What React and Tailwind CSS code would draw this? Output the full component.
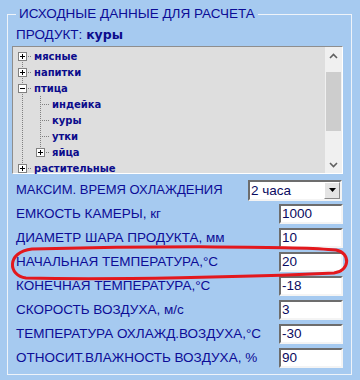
const treeItems = [
  { label: "мясные", cells: ["first"], box: "plus" },
  { label: "напитки", cells: ["tee"], box: "plus" },
  { label: "птица", cells: ["tee"], box: "minus" },
  { label: "индейка", cells: ["pipe", "tee"] },
  { label: "куры", cells: ["pipe", "tee"] },
  { label: "утки", cells: ["pipe", "tee"] },
  { label: "яйца", cells: ["pipe", "end"], box: "plus" },
  { label: "растительные", cells: ["end"], box: "plus" },
];

const fields = [
  { label: "ЕМКОСТЬ КАМЕРЫ, кг", value: "1000" },
  { label: "ДИАМЕТР ШАРА ПРОДУКТА, мм", value: "10" },
  { label: "НАЧАЛЬНАЯ ТЕМПЕРАТУРА,°С", value: "20" },
  { label: "КОНЕЧНАЯ ТЕМПЕРАТУРА,°С", value: "-18" },
  { label: "СКОРОСТЬ ВОЗДУХА, м/с", value: "3" },
  { label: "ТЕМПЕРАТУРА ОХЛАЖД.ВОЗДУХА,°С", value: "-30" },
  { label: "ОТНОСИТ.ВЛАЖНОСТЬ ВОЗДУХА, %", value: "90" },
];

// one 18x16 gutter cell of the tree lines
const TreeCell = ({ kind, box, last }) => {
  const dot = { stroke: "#808080", strokeWidth: 1, strokeDasharray: "1 1" };
  return (
    <svg width="18" height="16" className="shrink-0">
      {(kind === "pipe" || kind === "tee") && <line x1="9.5" y1="0" x2="9.5" y2="16" {...dot} />}
      {kind === "end" && <line x1="9.5" y1="0" x2="9.5" y2="8" {...dot} />}
      {kind === "first" && <line x1="9.5" y1="8" x2="9.5" y2="16" {...dot} />}
      {last && <line x1="9" y1="8.5" x2="18" y2="8.5" {...dot} />}
      {last && box && (
        <g>
          <rect x="5.5" y="4.5" width="8" height="8" fill="#ffffff" stroke="#808080" />
          <line x1="7" y1="8.5" x2="12" y2="8.5" stroke="#000000" />
          {box === "plus" && <line x1="9.5" y1="6" x2="9.5" y2="11" stroke="#000000" />}
        </g>
      )}
    </svg>
  );
};

const Chevron = ({ up }) => (
  <svg width="9" height="6" viewBox="0 0 9 6">
    <polyline
      points={up ? "1,5 4.5,1.5 8,5" : "1,1 4.5,4.5 8,1"}
      fill="none"
      stroke="#606060"
      strokeWidth="1.6"
    />
  </svg>
);

const App = () => {
  return (
    <div className="w-[360px] h-[380px] bg-[#a6caf0] relative overflow-hidden font-[family-name:Liberation_Sans,Arial,sans-serif]">
      <fieldset className="ml-[7px] mt-[6px] w-[345px] border border-[#eef3f9] pb-[4px]">
        <legend className="ml-[8px] px-[3px] text-[13.5px] leading-[16px] text-[#0c0c96]">
          ИСХОДНЫЕ ДАННЫЕ ДЛЯ РАСЧЕТА
        </legend>

        <div className="pl-[4px] pr-[8px]">
          {/* product */}
          <div className="pt-[5px] pb-[3px] pl-[4px] text-[13.5px] leading-[16px] text-[#0c0c96]">
            ПРОДУКТ:{" "}
            <span className="font-bold text-[12.5px] text-[#0c0c8c] font-[family-name:DejaVu_Sans,Verdana,sans-serif]">
              куры
            </span>
          </div>

          {/* tree */}
          <div className="flex h-[128px] bg-[#dedede] border-t border-l border-[#8e8e8e] border-b border-r border-b-white border-r-white">
            <div className="flex-1 pt-[1px]">
              {treeItems.map((item) => (
                <div key={item.label} className="flex items-center h-[16px]">
                  {item.cells.map((c, i) => (
                    <TreeCell
                      key={i}
                      kind={c}
                      box={item.box}
                      last={i === item.cells.length - 1}
                    />
                  ))}
                  <span className="ml-[3px] text-[10px] font-bold text-[#0c0c8c] font-[family-name:DejaVu_Sans,Verdana,sans-serif]">
                    {item.label}
                  </span>
                </div>
              ))}
            </div>
            <div className="w-[17px] bg-[#f0f0f0] flex flex-col">
              <div className="h-[17px] flex items-center justify-center">
                <Chevron up />
              </div>
              <div className="mt-[8px] h-[59px] mx-[1px] bg-[#cdcdcd]" />
              <div className="flex-1" />
              <div className="h-[17px] flex items-center justify-center">
                <Chevron />
              </div>
            </div>
          </div>

          {/* parameters */}
          <div className="mt-[4px]">
            <div className="flex items-center h-[24px]">
              <span className="flex-1 pl-[4px] text-[13px] text-[#0c0c96]">
                МАКСИМ. ВРЕМЯ ОХЛАЖДЕНИЯ
              </span>
              <div className="w-[94px] h-[21px] mr-[1px] flex bg-white border-2 border-t-[#6d6d6d] border-l-[#6d6d6d] border-b-[#f4f4f4] border-r-[#f4f4f4]">
                <span className="flex-1 pl-[1px] text-[13.5px] leading-[17px] text-[#0a0a60]">2 часа</span>
                <div className="w-[16px] flex items-center justify-center bg-[#e4e4e4] border border-t-white border-l-white border-b-[#8a8a8a] border-r-[#8a8a8a]">
                  <svg width="7" height="4" viewBox="0 0 7 4">
                    <polygon points="0,0 7,0 3.5,4" fill="#000000" />
                  </svg>
                </div>
              </div>
            </div>

            {fields.map((f) => (
              <div key={f.label} className="flex items-center h-[24px]">
                <span className="flex-1 pl-[4px] text-[13.5px] text-[#0c0c96]">{f.label}</span>
                <div className="w-[64px] h-[20px] bg-white border-2 border-t-[#6d6d6d] border-l-[#6d6d6d] border-b-[#f4f4f4] border-r-[#f4f4f4] pl-[1px] text-[13.5px] leading-[16px] text-[#0a0a60]">
                  {f.value}
                </div>
              </div>
            ))}
          </div>
        </div>
      </fieldset>

      {/* red hand-drawn mark over the initial temperature row */}
      <svg className="absolute left-0 top-0 pointer-events-none" width="360" height="380">
        <path
          d="M 32 249 C 150 246, 300 246, 336 250 C 351 253, 350 271, 334 273 C 250 277, 110 280, 26 278 C 8 276, 6 252, 32 249 Z"
          fill="none"
          stroke="#e3181d"
          strokeWidth="3"
        />
      </svg>
    </div>
  );
};

export default App;
